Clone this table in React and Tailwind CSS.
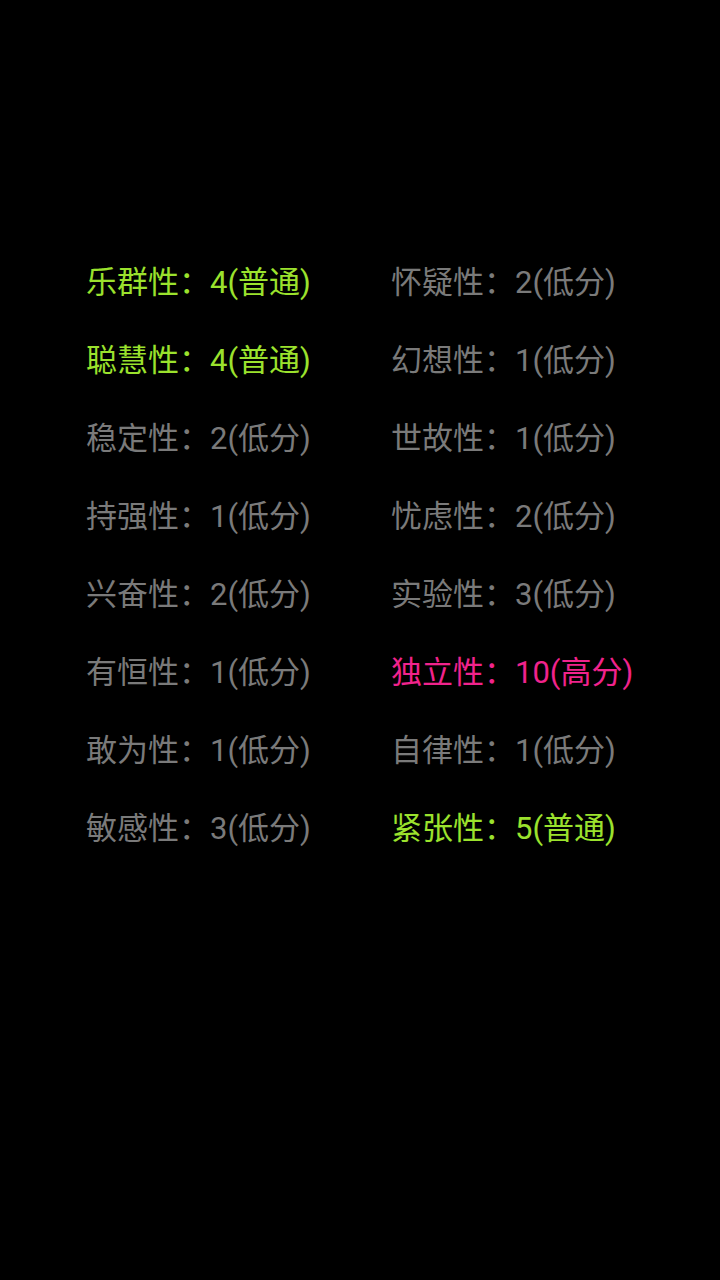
const G = "text-[#9be22d]";
const P = "text-[#f0238c]";
const N = "text-[#7a7a7a]";

const rows = [
  [["乐群性：4(普通)", G], ["怀疑性：2(低分)", N]],
  [["聪慧性：4(普通)", G], ["幻想性：1(低分)", N]],
  [["稳定性：2(低分)", N], ["世故性：1(低分)", N]],
  [["持强性：1(低分)", N], ["忧虑性：2(低分)", N]],
  [["兴奋性：2(低分)", N], ["实验性：3(低分)", N]],
  [["有恒性：1(低分)", N], ["独立性：10(高分)", P]],
  [["敢为性：1(低分)", N], ["自律性：1(低分)", N]],
  [["敏感性：3(低分)", N], ["紧张性：5(普通)", G]],
];

export default function App() {
  return (
    <div
      className="w-[720px] h-[1280px] bg-black pt-[243px] pl-[86px]"
      style={{ fontFamily: 'Roboto, "Noto Sans CJK SC", sans-serif' }}
    >
      {rows.map((r, i) => (
        <div key={i} className="flex h-[78px] items-center">
          {r.map(([t, c], j) => (
            <div key={j} className={`w-[305px] text-[31px] leading-none whitespace-nowrap ${c}`}>
              {t}
            </div>
          ))}
        </div>
      ))}
    </div>
  );
}
